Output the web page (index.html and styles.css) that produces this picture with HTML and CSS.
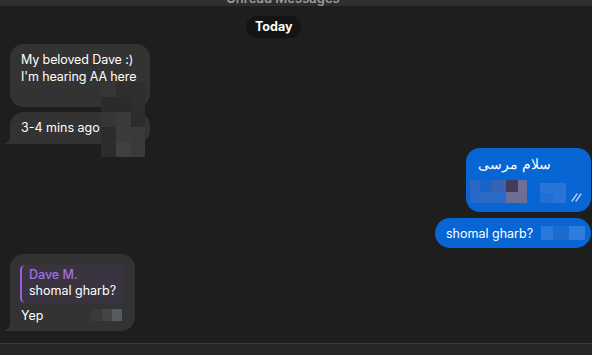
FILE: index.html
```html
<!DOCTYPE html>
<html>
<head>
<meta charset="utf-8">
<link rel="stylesheet" href="styles.css">
</head>
<body>
<div class="app">
  <div class="unread"><span>Unread Messages</span></div>
  <div class="chat">
    <div class="day"><span class="pill">Today</span></div>

    <div class="group in">
      <div class="bubble b1">My beloved Dave :)<br>I'm hearing AA here</div>
      <div class="bubble b2 tail">3-4 mins ago</div>
      <div class="blur blur1">
        <i style="background:#363636"></i><i style="background:#2e2e2e"></i><i style="background:#2e2e2e"></i>
        <i style="background:#2b2b2b"></i><i style="background:#2b2b2b"></i><i style="background:#2e2e2e"></i>
        <i style="background:#363636"></i><i style="background:#3a3a3a"></i><i style="background:#2c2c2c"></i>
        <i style="background:#2c2c2c"></i><i style="background:#3b3b3b"></i><i style="background:#3a3a3a"></i>
        <i style="background:#2c2c2c"></i><i style="background:#404040"></i><i style="background:#3a3a3a"></i>
      </div>
    </div>

    <div class="group out">
      <div class="bubble o1">
        <div class="fa"><span dir="rtl">سلام مرسی</span></div>
        <div class="row">
          <div class="blur blur2">
            <i style="background:#2d6ac4"></i><i style="background:#1a64c8"></i><i style="background:#3e62b0"></i><i style="background:#4a3650"></i><i style="background:#7a7090"></i>
            <i style="background:#2a6ac8"></i><i style="background:#2f6cc6"></i><i style="background:#2f6cc6"></i><i style="background:#7a6e90"></i><i style="background:#7a6e90"></i>
          </div>
          <div class="blur blur3">
            <i style="background:#2a74d8"></i><i style="background:#2a74d8"></i>
            <i style="background:#1f6fd4"></i><i style="background:#2a74d8"></i>
          </div>
          <svg class="ticks" width="12" height="10" viewBox="0 0 12 10"><path d="M1 9 L6 2 M5 9 L10 2" stroke="#b9cdf0" stroke-width="1.3" fill="none" stroke-linecap="round"/></svg>
        </div>
      </div>
      <div class="bubble o2"><span>shomal gharb?</span>
        <span class="blur blur4"><i style="background:#2a78dc"></i><i style="background:#1a6cd2"></i><i style="background:#2f7cde"></i></span>
      </div>
    </div>

    <div class="group in g3">
      <div class="bubble b3 tail">
        <div class="reply">
          <div class="rname">Dave M.</div>
          <div class="rtext">shomal gharb?</div>
        </div>
        <div class="yep"><span>Yep</span>
          <span class="blur blur5"><i style="background:#3a3a3a"></i><i style="background:#444"></i><i style="background:#555b60"></i></span>
        </div>
      </div>
    </div>
  </div>
  <div class="composer"></div>
</div>
</body>
</html>
```

FILE: styles.css
```css
* { box-sizing: border-box; }
html, body { margin: 0; padding: 0; }
body {
  background: #1e1e1e;
  font-family: Inter, "Open Sans", "Noto Sans", sans-serif;
  color: #fff;
  font-size: 12.5px;
  width: 592px;
  height: 355px;
  overflow: hidden;
  white-space: nowrap;
}
.app { display: flex; flex-direction: column; height: 355px; }
.unread {
  height: 6px;
  background: #2f2f2f;
  overflow: hidden;
  display: flex;
  justify-content: center;
}
.unread span {
  color: #9a9a9a;
  font-size: 13px;
  font-weight: 600;
  line-height: 13px;
  margin-top: -8px;
  margin-left: -26px;
}
.chat { flex: 1; position: relative; }
.day { display: flex; padding-left: 246px; margin-top: 10px; }
.pill {
  background: #141414;
  color: #fff;
  font-weight: 700;
  font-size: 12.5px;
  height: 22px;
  line-height: 22px;
  padding: 0 9px;
  border-radius: 11px;
}
.group { display: flex; flex-direction: column; position: relative; }
.group.in { align-items: flex-start; padding-left: 10px; margin-top: 6px; }
.group.out { align-items: flex-end; padding-right: 1px; margin-top: 4px; }
.bubble {
  background: #333333;
  border-radius: 14px;
  line-height: 17px;
  position: relative;
}
.b1 { width: 140px; height: 63px; padding: 7px 11px; letter-spacing: -0.1px; }
.b2 { width: 140px; height: 32px; padding: 7px 11px; margin-top: 5px; border-bottom-left-radius: 4px; }
.tail::before {
  content: "";
  position: absolute;
  left: -6px;
  bottom: 0;
  width: 14px;
  height: 12px;
  background: #333333;
  clip-path: path("M0 12 C5 10 7 6 7 0 L14 0 L14 12 Z");
}
.blur { display: grid; }
.blur i { display: block; }
.blur1 {
  position: absolute;
  left: 101px;
  top: 38px;
  grid-template-columns: 15px 15px 14px;
  grid-auto-rows: 15px;
}
.o1 {
  background: #0866d4;
  width: 125px;
  height: 64px;
  border-radius: 14px;
  padding: 6px 12px 0 12px;
}
.fa { font-size: 13.5px; line-height: 20px; display: flex; }
.row { display: flex; align-items: flex-end; position: relative; height: 32px; }
.blur2 {
  grid-template-columns: 10px 12px 14px 12px 9px;
  grid-auto-rows: 12px 11px;
  margin-left: -8px;
  margin-top: 6px;
  align-self: flex-start;
  opacity: .9;
}
.blur3 {
  grid-template-columns: 13px 13px;
  grid-auto-rows: 10px 10px;
  margin-left: 13px;
  margin-bottom: 3px;
}
.ticks { position: absolute; right: -4px; bottom: 4px; }
.o2 {
  background: #0866d4;
  width: 156px;
  height: 30px;
  margin-top: 6px;
  padding: 6px 11px;
  border-radius: 15px;
  display: flex;
  align-items: center;
}
.blur4 {
  display: inline-grid;
  grid-template-columns: 12px 16px 16px;
  grid-auto-rows: 14px;
  margin-left: 8px;
}
.g3 { margin-top: 5px; }
.b3 {
  width: 125px;
  height: 77px;
  padding: 11px 11px 0 10px;
  border-bottom-left-radius: 4px;
}
.reply {
  background: #3a3440;
  border-left: 2px solid #9a5fe0;
  border-radius: 5px;
  height: 38px;
  padding: 2px 0 0 7px;
  width: 104px;
  line-height: 16px;
}
.rname { color: #a070e8; font-weight: 500; }
.rtext { color: #fff; }
.yep { display: flex; align-items: center; margin-top: 3px; padding-left: 1px; height: 18px; }
.blur5 {
  display: inline-grid;
  grid-template-columns: 12px 10px 10px;
  grid-auto-rows: 12px;
  margin-left: 47px;
}
.composer {
  height: 12px;
  background: #262626;
  border-top: 1px solid #3a3a3a;
}
```
